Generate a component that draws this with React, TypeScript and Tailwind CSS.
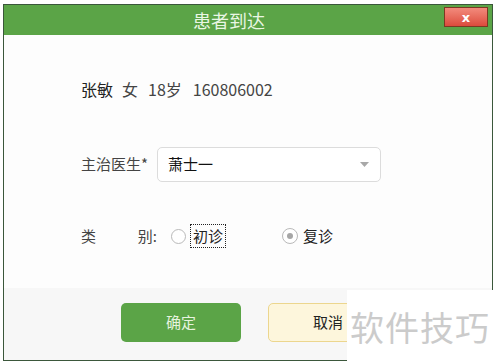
import React from "react";

const font = { fontFamily: '"Microsoft YaHei", "Noto Sans CJK SC", "Noto Sans", sans-serif' };

export default function App() {
  return (
    <div className="relative w-[497px] h-[364px] bg-white pt-[4px] pl-[3px]" style={font}>
      <div className="w-[490px] h-[357px] border border-[#3b573b] flex flex-col bg-[#fdfdfd]">
        {/* title bar */}
        <div className="h-[30px] bg-[#5ba447] flex items-start shrink-0">
          <div className="ml-[189px] h-[29px] flex items-center text-[18px] leading-none text-[#e9f6e3]">患者到达</div>
          <div className="ml-auto mr-[4px] mt-[2px] w-[44px] h-[20px] border border-[#7a3a22] bg-gradient-to-b from-[#f28a7c] to-[#dc4a3c] flex items-center justify-center">
            <span className="text-white text-[13px] font-bold leading-none" style={{ fontFamily: '"DejaVu Sans", sans-serif' }}>x</span>
          </div>
        </div>
        {/* body */}
        <div className="flex-1 flex flex-col pl-[77px] text-[15px] text-[#444]">
          <div className="mt-[42px] h-[24px] flex items-center text-[16px]">
            <span className="text-[#222]">张敏</span>
            <span className="ml-[9px]">女</span>
            <span className="ml-[10px]">18岁</span>
            <span className="ml-[11px]">160806002</span>
          </div>
          <div className="mt-[46px] h-[35px] flex items-center">
            <span className="w-[76px] text-[15px]">主治医生*</span>
            <div className="w-[224px] h-[35px] border border-[#dcdcdc] rounded-[5px] bg-white flex items-center pl-[10px] pr-[10px]">
              <span className="text-[15px] text-[#111]">萧士一</span>
              <svg className="ml-auto mr-[1px]" width="9" height="5" viewBox="0 0 9 5">
                <path d="M0 0 L9 0 L4.5 5 Z" fill="#a8a8a8" />
              </svg>
            </div>
          </div>
          <div className="mt-[42px] h-[24px] flex items-center text-[15px]">
            <div className="w-[76px] flex justify-between">
              <span>类</span>
              <span>别:</span>
            </div>
            <div className="ml-[14px] w-[15px] h-[15px] rounded-full border border-[#b9b9b9] bg-white" />
            <div className="ml-[4px] h-[24px] px-[2px] border border-dotted border-[#222] flex items-center text-[15px] text-[#222]">初诊</div>
            <div className="ml-[56px] w-[16px] h-[16px] rounded-full border border-[#b9b9b9] bg-white flex items-center justify-center">
              <div className="w-[6px] h-[6px] rounded-full bg-[#a6a6a6]" />
            </div>
            <span className="ml-[5px] text-[15px] text-[#222]">复诊</span>
          </div>
        </div>
        {/* footer */}
        <div className="h-[72px] bg-[#f7f7f7] shrink-0 flex items-start pt-[15px] pl-[117px]">
          <div className="w-[120px] h-[39px] rounded-[5px] bg-[#5ba447] flex items-center justify-center text-[15px] text-[#e6f3df]">确定</div>
          <div className="ml-[27px] w-[120px] h-[39px] rounded-[5px] border border-[#ecd68e] bg-[#fdf6dc] flex items-center justify-center text-[15px] text-[#222]">取消</div>
        </div>
      </div>
      {/* watermark overlay */}
      <div className="absolute left-[347px] top-[290px] w-[150px] h-[74px] bg-white flex items-center pl-[3px]">
        <span className="text-[34px] leading-none text-[#cbcbcb] tracking-[1px]">软件技巧</span>
      </div>
    </div>
  );
}
